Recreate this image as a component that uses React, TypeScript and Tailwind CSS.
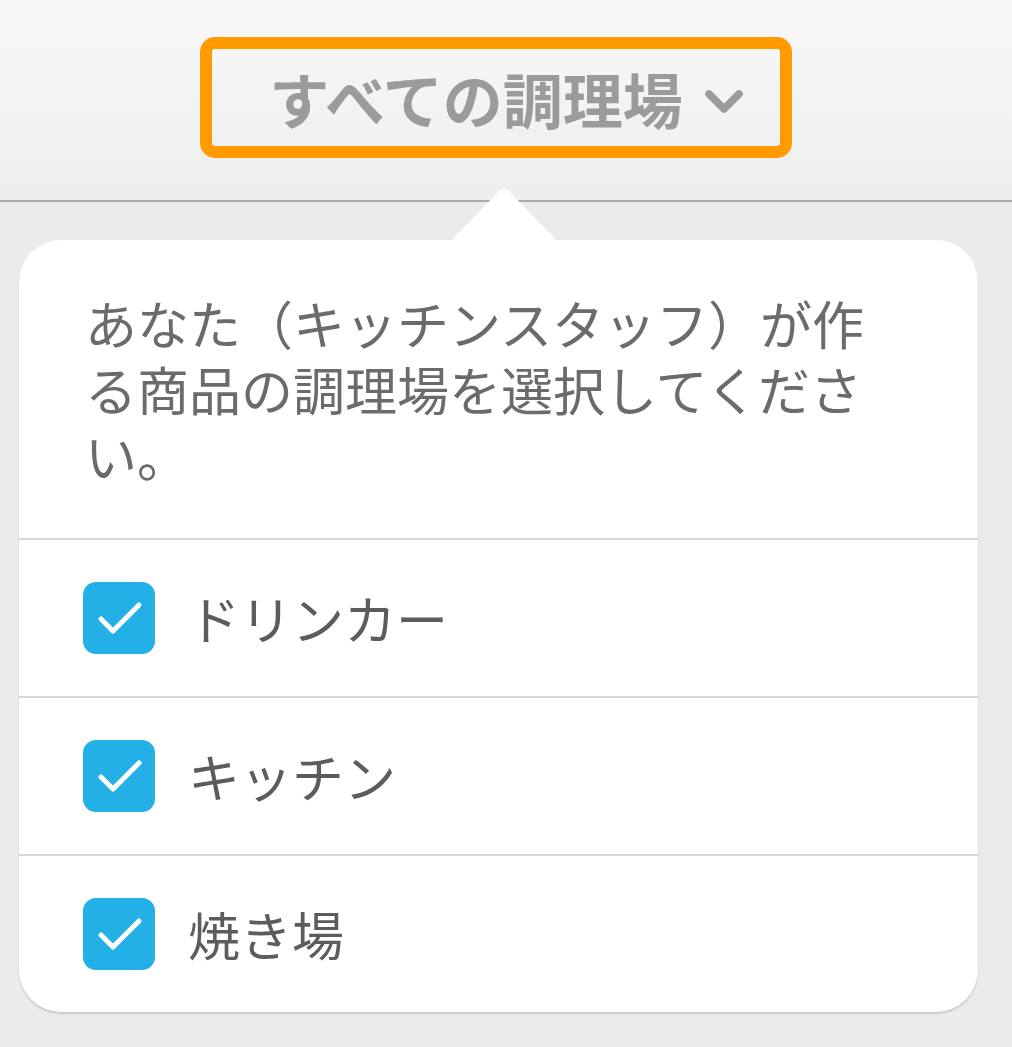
import React from 'react'

const font = { fontFamily: '"Noto Sans CJK JP", "Noto Sans", sans-serif' }

const stations = ['ドリンカー', 'キッチン', '焼き場']

function CheckBox() {
  return (
    <div className="w-[72px] h-[72px] rounded-[13px] bg-[#22b0e6] flex items-center justify-center shrink-0">
      <svg width="72" height="72" viewBox="0 0 72 72" fill="none">
        <path
          d="M18 37 L30 49 L56 23"
          stroke="white"
          strokeWidth="5"
          strokeLinecap="round"
          strokeLinejoin="round"
        />
      </svg>
    </div>
  )
}

export default function App() {
  return (
    <div className="w-[1012px] h-[1047px] bg-[#ebebeb] overflow-hidden" style={font}>
      {/* Header */}
      <div className="h-[200px] bg-gradient-to-b from-[#f8f8f8] to-[#eeeeee] pt-[37px]">
        <div className="ml-[200px] w-[592px] h-[121px] border-[12px] border-[#ff9a00] rounded-[15px] flex items-center justify-center pl-[20px] gap-[22px]">
          <span className="text-[60px] leading-none font-semibold text-[#9b9b9b]">
            すべての調理場
          </span>
          <svg width="38" height="26" viewBox="0 0 38 26" fill="none" className="mt-[8px]">
            <path
              d="M4 5 L19 20 L34 5"
              stroke="#9b9b9b"
              strokeWidth="7.5"
              strokeLinecap="round"
              strokeLinejoin="round"
            />
          </svg>
        </div>
      </div>
      <div className="h-[2px] bg-[#a9a9a9]" />

      {/* Popover */}
      <div className="pt-[38px] px-[19px]">
        <div className="relative w-[959px] bg-white rounded-[42px] shadow-[0_2px_2px_rgba(0,0,0,0.14)]">
          <svg
            className="absolute left-[432px] top-[-53px]"
            width="106"
            height="54"
            viewBox="0 0 106 54"
          >
            <path d="M0 54 L47 5 Q53 -1 59 5 L106 54 Z" fill="white" />
          </svg>

          <div className="pt-[50px] pb-[50px] pl-[66px] pr-[68px]">
            <p className="text-[52px] leading-[66px] text-[#6b6b6b]">
              あなた（キッチンスタッフ）が作る商品の調理場を選択してください。
            </p>
          </div>

          {stations.map((label) => (
            <div
              key={label}
              className="h-[158px] border-t-2 border-[#d6d6d6] flex items-center pl-[64px] gap-[33px]"
            >
              <CheckBox />
              <span className="text-[52px] leading-none text-[#5c5c5c]">{label}</span>
            </div>
          ))}
        </div>
      </div>
    </div>
  )
}
